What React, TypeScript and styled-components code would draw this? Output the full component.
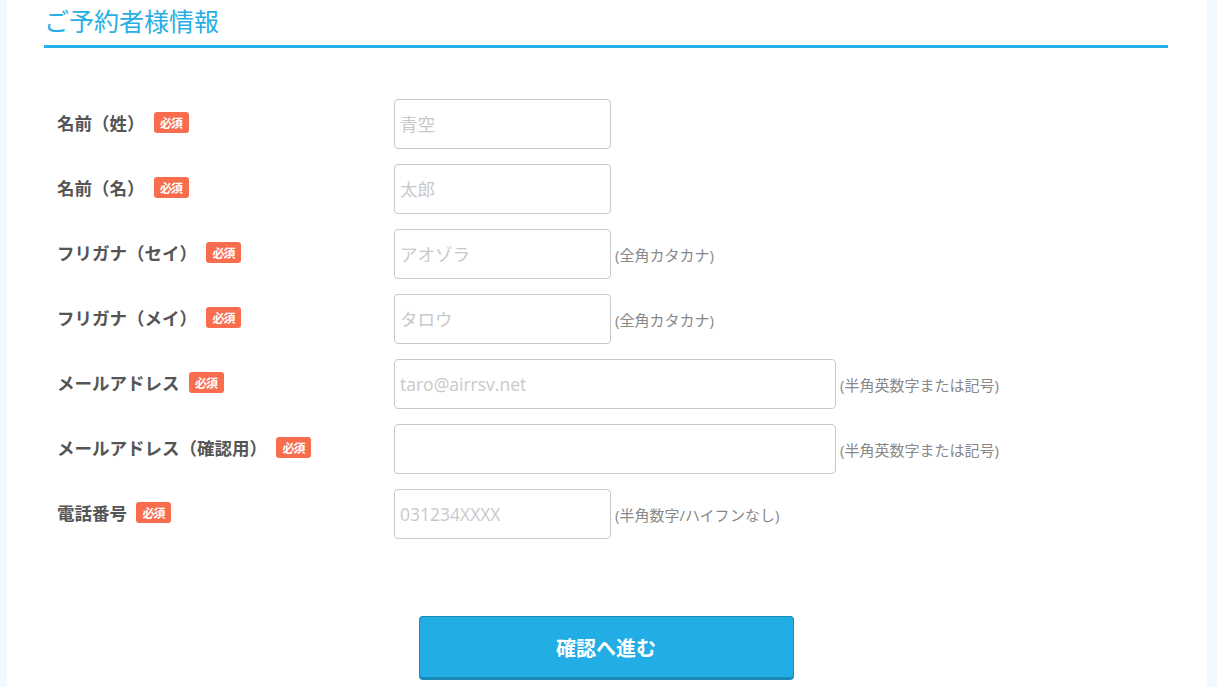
import React from "react";
import styled, { createGlobalStyle } from "styled-components";

const GlobalStyle = createGlobalStyle`
  html, body {
    margin: 0;
    padding: 0;
    background: #f2faff;
    font-family: "Noto Sans CJK JP", "Open Sans", sans-serif;
  }
`;

const Page = styled.div`
  margin: 0 10px 0 7px;
  background: #fff;
  min-height: 687px;
  padding: 0 39px 0 37px;
  box-sizing: border-box;
`;

const Heading = styled.h2`
  margin: 0;
  padding: 3px 0 8px;
  font-size: 25px;
  font-weight: 400;
  line-height: 34px;
  color: #27aee4;
  border-bottom: 3px solid #22b1e8;
`;

const Form = styled.div`
  display: flex;
  flex-direction: column;
  gap: 15px;
  padding: 51px 0 0 13px;
`;

const Row = styled.div`
  display: flex;
  align-items: center;
  height: 50px;
`;

const Label = styled.div`
  width: 337px;
  display: flex;
  align-items: center;
  margin-bottom: 3px;
  font-size: 17.5px;
  font-weight: 700;
  color: #555;
`;

const Badge = styled.span`
  margin-left: 9px;
  width: 35px;
  height: 21px;
  border-radius: 3px;
  background: #f96d4f;
  color: #fff;
  font-size: 12px;
  font-weight: 700;
  display: inline-flex;
  align-items: center;
  justify-content: center;
  letter-spacing: -1px;
`;

const Input = styled.input<{ wide?: boolean }>`
  width: ${({ wide }) => (wide ? 442 : 217)}px;
  height: 50px;
  box-sizing: border-box;
  border: 1px solid #c8c8c8;
  border-radius: 4px;
  padding: 0 5px;
  font-family: "Open Sans", "Noto Sans CJK JP", sans-serif;
  font-size: 17.5px;
  color: #333;
  outline: none;
  &::placeholder {
    color: #c9c9c9;
  }
`;

const Note = styled.span`
  margin-left: 4px;
  margin-top: 1px;
  font-size: 15px;
  color: #888;
  font-family: "Open Sans", "Noto Sans CJK JP", sans-serif;
`;

const Actions = styled.div`
  display: flex;
  justify-content: center;
  padding-top: 77px;
`;

const Button = styled.button`
  width: 375px;
  height: 64px;
  border: 1px solid #1a8ab8;
  border-bottom-width: 3px;
  border-radius: 4px;
  background: #22aee4;
  color: #fff;
  font-family: "Noto Sans CJK JP", sans-serif;
  font-size: 20px;
  font-weight: 700;
  cursor: pointer;
`;

type Field = {
  label: string;
  placeholder?: string;
  note?: string;
  wide?: boolean;
};

const fields: Field[] = [
  { label: "名前（姓）", placeholder: "青空" },
  { label: "名前（名）", placeholder: "太郎" },
  { label: "フリガナ（セイ）", placeholder: "アオゾラ", note: "(全角カタカナ)" },
  { label: "フリガナ（メイ）", placeholder: "タロウ", note: "(全角カタカナ)" },
  { label: "メールアドレス", placeholder: "taro@airrsv.net", note: "(半角英数字または記号)", wide: true },
  { label: "メールアドレス（確認用）", note: "(半角英数字または記号)", wide: true },
  { label: "電話番号", placeholder: "031234XXXX", note: "(半角数字/ハイフンなし)" },
];

export default function App() {
  return (
    <>
      <GlobalStyle />
      <Page>
        <Heading>ご予約者様情報</Heading>
        <Form>
          {fields.map((f) => (
            <Row key={f.label}>
              <Label>
                {f.label}
                <Badge>必須</Badge>
              </Label>
              <Input wide={f.wide} placeholder={f.placeholder} />
              {f.note && <Note>{f.note}</Note>}
            </Row>
          ))}
        </Form>
        <Actions>
          <Button>確認へ進む</Button>
        </Actions>
      </Page>
    </>
  );
}
